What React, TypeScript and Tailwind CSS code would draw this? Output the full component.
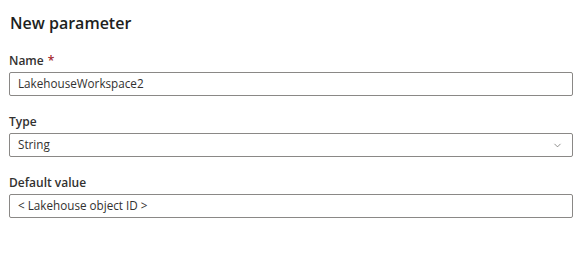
import { ChevronDown } from "lucide-react";

const FONT = { fontFamily: '"Open Sans", "Noto Sans", sans-serif' };

function Field({
  label,
  required,
  children,
}: {
  label: string;
  required?: boolean;
  children: React.ReactNode;
}) {
  return (
    <div className="flex flex-col">
      <label className="mb-[2px] h-[18px] text-[12px] font-semibold leading-[18px] text-[#323130]">
        {label}
        {required && <span className="ml-[4px] text-[#a4262c]">*</span>}
      </label>
      {children}
    </div>
  );
}

export default function App() {
  return (
    <div className="h-[277px] w-[583px] bg-white pl-[9px] pr-[10px] pt-[10px]" style={FONT}>
      <h1 className="mb-[16px] ml-[1px] text-[16px] font-semibold leading-[26px] text-[#201f1e]">
        New parameter
      </h1>
      <div className="flex flex-col gap-[17px]">
        <Field label="Name" required>
          <div className="flex h-[24px] items-center rounded-[2px] border border-[#8a8886] px-[8px] text-[11.7px] text-[#323130]">
            LakehouseWorkspace2
          </div>
        </Field>
        <Field label="Type">
          <div className="flex h-[24px] items-center justify-between rounded-[2px] border border-[#8a8886] pl-[8px] pr-[9px] text-[11.7px] text-[#323130]">
            <span>String</span>
            <ChevronDown className="h-[11px] w-[11px] text-[#605e5c]" strokeWidth={1.5} />
          </div>
        </Field>
        <Field label="Default value">
          <div className="flex h-[24px] items-center rounded-[2px] border border-[#8a8886] px-[8px] text-[11.7px] text-[#323130]">
            {"< Lakehouse object ID >"}
          </div>
        </Field>
      </div>
    </div>
  );
}
